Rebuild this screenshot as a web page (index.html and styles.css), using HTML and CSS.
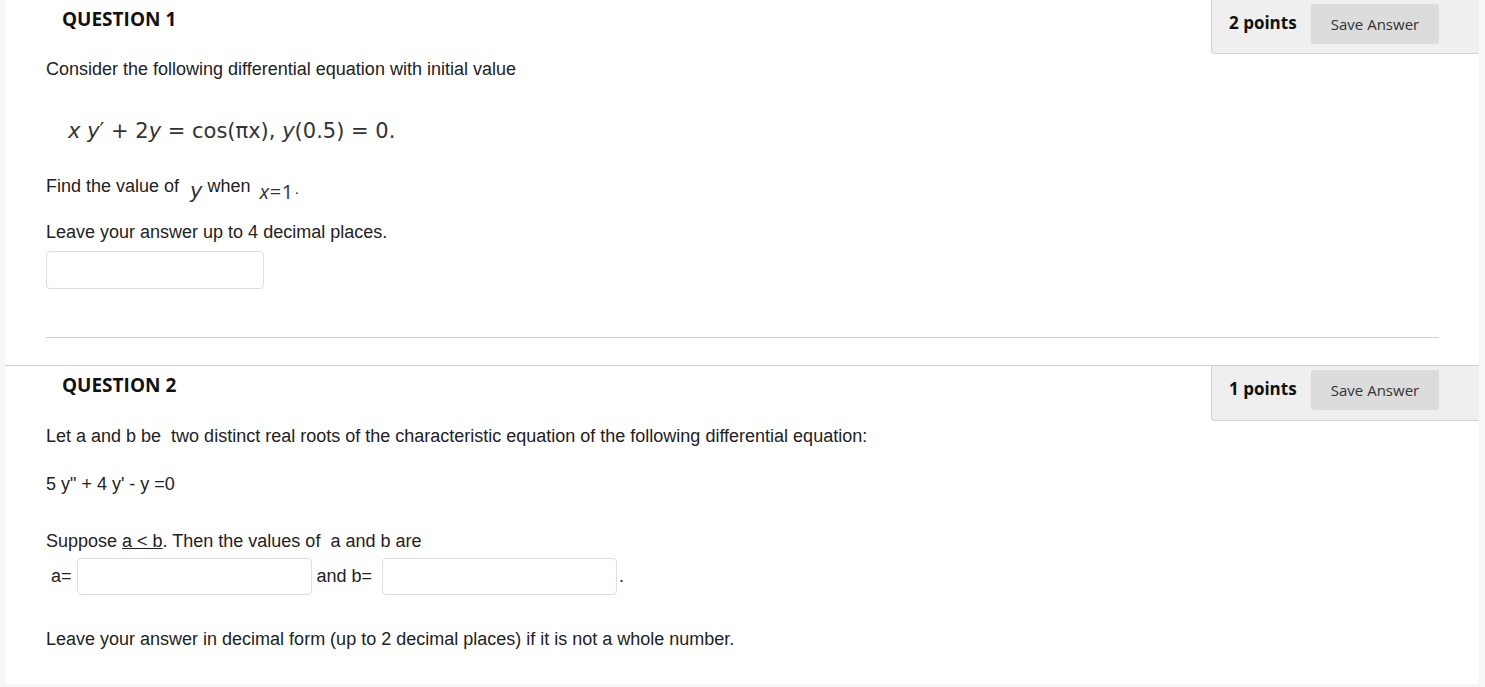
FILE: index.html
```html
<!DOCTYPE html>
<html>
<head>
<meta charset="utf-8">
<link rel="stylesheet" href="styles.css">
</head>
<body>
<div class="page">
  <section class="question q1">
    <div class="q-head">
      <h3 class="q-title">QUESTION 1</h3>
      <div class="points-box">
        <span class="points">2 points</span>
        <button class="save-btn">Save Answer</button>
      </div>
    </div>
    <div class="q-body">
      <p class="txt first">Consider the following differential equation with initial value</p>
      <p class="eq"><i>x</i> <i>y</i>′ + 2<i>y</i> = cos(πx), <i>y</i>(0.5) = 0.</p>
      <p class="txt find">Find the value of <span class="m m-y"><i>y</i></span> when <span class="m m-x"><i>x</i><span class="eqs">=</span>1</span><span class="dot">·</span></p>
      <p class="txt leave">Leave your answer up to 4 decimal places.</p>
      <input class="answer a1" type="text">
      <hr class="sep">
    </div>
  </section>
  <section class="question q2">
    <div class="q-head">
      <h3 class="q-title">QUESTION 2</h3>
      <div class="points-box">
        <span class="points">1 points</span>
        <button class="save-btn">Save Answer</button>
      </div>
    </div>
    <div class="q-body">
      <p class="txt first">Let a and b be &nbsp;two distinct real roots of the characteristic equation of the following differential equation:</p>
      <p class="txt de">5 y" + 4 y' - y =0</p>
      <p class="txt suppose">Suppose <u>a &lt; b</u>. Then the values of &nbsp;a and b are</p>
      <div class="ab-row">
        <span class="lbl-a">a=</span>
        <input class="answer ab" type="text">
        <span class="lbl-b">and b=</span>
        <input class="answer ab" type="text">
        <span class="end">.</span>
      </div>
      <p class="txt final">Leave your answer in decimal form (up to 2 decimal places) if it is not a whole number.</p>
    </div>
  </section>
</div>
</body>
</html>
```
FILE: styles.css
```css
html, body {
  margin: 0;
  padding: 0;
}
body {
  background: #f6f6f6;
  font-family: "Liberation Sans", Arial, sans-serif;
  color: #222;
}
.page {
  padding: 0 6px 3px 5px;
}
.question {
  background: #fff;
}
.q1 {
  height: 365px;
  border-bottom: 1px solid #cfcfcf;
}
.q2 {
  height: 318px;
}
.q-head {
  display: flex;
  justify-content: space-between;
  align-items: flex-start;
}
.q-title {
  margin: 7px 0 0 57px;
  font-family: "Open Sans", sans-serif;
  font-weight: 700;
  font-size: 19px;
  line-height: 24px;
  color: #111;
}
.points-box {
  box-sizing: border-box;
  width: 268px;
  height: 54px;
  background: #efefef;
  border-left: 1px solid #d4d4d4;
  border-bottom: 1px solid #d4d4d4;
  border-bottom-left-radius: 4px;
  display: flex;
  align-items: flex-start;
  padding: 4px 40px 0 17px;
}
.q2 .points-box {
  height: 55px;
}
.points {
  font-family: "Open Sans", sans-serif;
  font-weight: 700;
  font-size: 17px;
  line-height: 37px;
  color: #111;
  flex: 1;
}
.save-btn {
  width: 128px;
  height: 40px;
  border: none;
  border-radius: 3px;
  background: #dcdcdc;
  font-family: "Open Sans", sans-serif;
  font-size: 15px;
  color: #333;
  padding: 0 0 1px 0;
}
.q-body {
  padding: 0 40px 0 41px;
}
.txt {
  margin: 0;
  font-size: 18px;
  line-height: 20px;
}
.q1 .first {
  margin-top: 5px;
}
.eq {
  margin: 39px 0 0 22px;
  font-family: "DejaVu Sans", sans-serif;
  font-size: 21px;
  line-height: 26px;
  color: #333;
}
.eq i {
  font-style: italic;
}
.find {
  margin-top: 30px;
  line-height: 24px;
}
.m {
  font-family: "DejaVu Sans", sans-serif;
  font-size: 21px;
  color: #333;
}
.m-y {
  margin-left: 6px;
  vertical-align: -6px;
}
.m-x {
  font-family: "Open Sans", sans-serif;
  font-size: 20px;
  margin-left: 4px;
  vertical-align: -7px;
  letter-spacing: -0.5px;
}
.eqs {
  margin: 0 1px 0 1px;
}
.dot {
  vertical-align: -5px;
  font-size: 14px;
  margin-left: 2px;
}
.leave {
  margin-top: 18px;
}
.answer {
  display: block;
  box-sizing: border-box;
  border: 1px solid #dedede;
  border-radius: 4px;
  background: #fff;
  outline: none;
  margin: 0;
}
.a1 {
  width: 218px;
  height: 38px;
  margin-top: 9px;
}
.sep {
  border: 0;
  border-top: 1px solid #d0d0d0;
  margin: 48px 0 0 0;
}
.q2 .first {
  margin-top: 5px;
}
.de {
  margin-top: 28px;
}
.suppose {
  margin-top: 37px;
}
.ab-row {
  display: flex;
  align-items: center;
  margin-top: 7px;
  font-size: 18px;
}
.lbl-a {
  margin-left: 5px;
  margin-right: 5px;
}
.ab {
  width: 235px;
  height: 37px;
}
.lbl-b {
  margin: 0 10px 0 5px;
}
.end {
  margin-left: 2px;
}
.final {
  margin-top: 34px;
}
```
